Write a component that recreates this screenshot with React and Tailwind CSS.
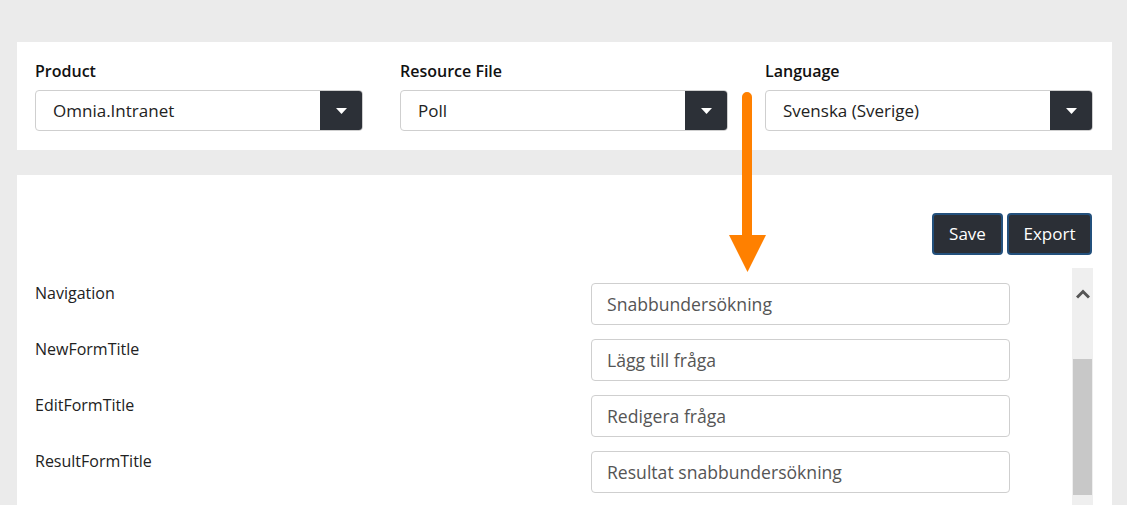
import React from 'react'

const font = { fontFamily: '"Open Sans", "Liberation Sans", sans-serif' }

const Select = ({ label, value }) => (
  <div className="flex w-[328px] flex-col">
    <span className="h-[30px] text-[16px] leading-[30px] font-semibold text-[#111]">{label}</span>
    <div className="mt-[4px] flex h-[41px] overflow-hidden rounded-[4px] border border-[#cfcfcf] bg-white">
      <div className="flex flex-1 items-center pl-[17px] text-[17px] text-[#222]">{value}</div>
      <div className="flex w-[42px] items-center justify-center bg-[#2c3037]">
        <svg width="11" height="6" viewBox="0 0 11 6">
          <path d="M0 0 H11 L5.5 6 Z" fill="#fff" />
        </svg>
      </div>
    </div>
  </div>
)

const rows = [
  ['Navigation', 'Snabbundersökning'],
  ['NewFormTitle', 'Lägg till fråga'],
  ['EditFormTitle', 'Redigera fråga'],
  ['ResultFormTitle', 'Resultat snabbundersökning'],
]

const Btn = ({ children, w }) => (
  <button className={`h-[42px] ${w} rounded-[4px] border-2 border-[#23507c] bg-[#2b2f36] text-[17px] text-white`}>
    {children}
  </button>
)

export default function App() {
  return (
    <div style={font} className="relative h-[505px] w-[1127px] overflow-hidden bg-[#ebebeb] pt-[42px]">
      <div className="ml-[17px] flex h-[108px] w-[1095px] gap-[37px] bg-white pt-[14px] pl-[18px]">
        <Select label="Product" value="Omnia.Intranet" />
        <Select label="Resource File" value="Poll" />
        <Select label="Language" value="Svenska (Sverige)" />
      </div>

      <div className="mt-[25px] ml-[17px] h-[400px] w-[1095px] bg-white pt-[38px] pr-[20px] pl-[18px]">
        <div className="flex justify-end gap-[4px]">
          <Btn w="w-[71px]">Save</Btn>
          <Btn w="w-[85px]">Export</Btn>
        </div>
        <div className="mt-[13px] flex">
          <div className="flex flex-1 flex-col gap-[14px] pt-[15px]">
            {rows.map(([k, v]) => (
              <div key={k} className="flex">
                <span className="w-[556px] text-[16px] leading-[20px] text-[#222]">{k}</span>
                <div className="flex h-[42px] w-[419px] items-center rounded-[4px] border border-[#cfcfcf] pl-[15px] text-[17.6px] text-[#555]">
                  {v}
                </div>
              </div>
            ))}
          </div>
          <div className="-mr-[1px] flex h-[240px] w-[21px] flex-col items-center bg-[#efefef]">
            <svg className="mt-[21px]" width="14" height="10" viewBox="0 0 14 10">
              <path d="M1 8.5 L7 2.5 L13 8.5" stroke="#555" strokeWidth="3" fill="none" />
            </svg>
            <div className="mt-[60px] h-[136px] w-[19px] bg-[#c8c8c8]" />
          </div>
        </div>
      </div>

      <svg className="absolute top-[92px] left-[729px]" width="38" height="180" viewBox="0 0 38 180">
        <path d="M13 5 A5 5 0 0 1 23 5 V143 H37 L18.5 180 L0 143 H13 Z" fill="#ff8000" />
      </svg>
    </div>
  )
}
